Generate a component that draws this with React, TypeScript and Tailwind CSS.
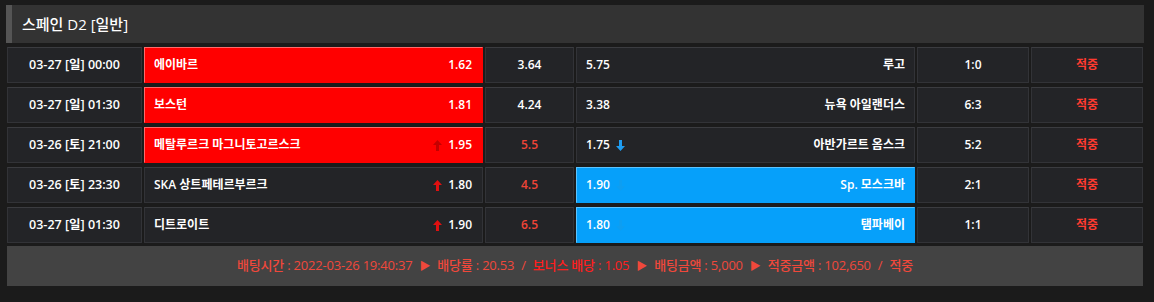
import React from 'react'

type Side = 'none' | 'home' | 'away'

type Game = {
  date: string
  home: string
  homeOdds: string
  homeUp?: boolean
  draw: string
  drawRed?: boolean
  away: string
  awayOdds: string
  awayDown?: boolean
  score: string
  pick: Side
}

const games: Game[] = [
  { date: '03-27 [일] 00:00', home: '에이바르', homeOdds: '1.62', draw: '3.64', away: '루고', awayOdds: '5.75', score: '1:0', pick: 'home' },
  { date: '03-27 [일] 01:30', home: '보스턴', homeOdds: '1.81', draw: '4.24', away: '뉴욕 아일랜더스', awayOdds: '3.38', score: '6:3', pick: 'home' },
  { date: '03-26 [토] 21:00', home: '메탈루르크 마그니토고르스크', homeOdds: '1.95', homeUp: true, draw: '5.5', drawRed: true, away: '아반가르트 옴스크', awayOdds: '1.75', awayDown: true, score: '5:2', pick: 'home' },
  { date: '03-26 [토] 23:30', home: 'SKA 상트페테르부르크', homeOdds: '1.80', homeUp: true, draw: '4.5', drawRed: true, away: 'Sp. 모스크바', awayOdds: '1.90', awayDown: true, score: '2:1', pick: 'away' },
  { date: '03-27 [일] 01:30', home: '디트로이트', homeOdds: '1.90', homeUp: true, draw: '6.5', drawRed: true, away: '탬파베이', awayOdds: '1.80', awayDown: true, score: '1:1', pick: 'away' },
]

const cell = 'h-[36px] flex items-center border border-[#323337] border-t-[#3b3c40] bg-[#232427]'
const redCell = 'h-[36px] flex items-center border border-[#ff0000] border-t-[#ff6b6b] border-l-[#ff6b6b] bg-[#ff0000]'
const blueCell = 'h-[36px] flex items-center border border-[#06a0fa] border-t-[#5cc4ff] border-l-[#5cc4ff] bg-[#06a0fa]'

function UpArrow({ color }: { color: string }) {
  return (
    <svg width="9" height="11" viewBox="0 0 9 11" className="mr-[6px]">
      <path d="M4.5 0 L9 5 L6 5 L6 11 L3 11 L3 5 L0 5 Z" fill={color} />
    </svg>
  )
}

function DownArrow({ color }: { color: string }) {
  return (
    <svg width="9" height="11" viewBox="0 0 9 11" className="ml-[6px]">
      <path d="M3 0 L6 0 L6 6 L9 6 L4.5 11 L0 6 L3 6 Z" fill={color} />
    </svg>
  )
}

function Row({ g }: { g: Game }) {
  const homeSel = g.pick === 'home'
  const awaySel = g.pick === 'away'
  return (
    <div className="flex gap-[2px]">
      <div className={`${cell} w-[135px] justify-center text-[12.5px]`}>{g.date}</div>
      <div className={`${homeSel ? redCell : cell} w-[339px] justify-between pl-[9px] pr-[10px]`}>
        <span>{g.home}</span>
        <span className="flex items-center">
          {g.homeUp && <UpArrow color={homeSel ? '#c40000' : '#e01010'} />}
          {g.homeOdds}
        </span>
      </div>
      <div className={`${cell} w-[89px] justify-center ${g.drawRed ? 'text-[#ef4437]' : ''}`}>{g.draw}</div>
      <div className={`${awaySel ? blueCell : cell} w-[339px] justify-between pl-[9px] pr-[9px]`}>
        <span className="flex items-center">
          {g.awayOdds}
          {g.awayDown && <DownArrow color={awaySel ? '#0d9ef2' : '#1e9cf0'} />}
        </span>
        <span>{g.away}</span>
      </div>
      <div className={`${cell} w-[112px] justify-center`}>{g.score}</div>
      <div className={`${cell} w-[112px] justify-center text-[#ff3b30]`}>적중</div>
    </div>
  )
}

export default function App() {
  return (
    <div
      className="h-[302px] bg-[#1b1b1b] pt-[5px] pl-[6px] text-white text-[12px] font-semibold"
      style={{ fontFamily: '"Open Sans", "Noto Sans CJK KR", sans-serif' }}
    >
      <div className="w-[1138px] h-[38px] flex items-center bg-[#333333] border-l-[6px] border-[#555555] pl-[10px] text-[15px] font-medium">
        스페인 D2 [일반]
      </div>
      <div className="mt-[4px] ml-[1px] flex flex-col gap-[4px]">
        {games.map((g, i) => (
          <Row key={i} g={g} />
        ))}
      </div>
      <div className="mt-[3px] ml-[1px] w-[1136px] h-[40px] bg-[#434343] flex items-center justify-center gap-[7px] text-[#f0483b] text-[13px] font-medium tracking-[-0.2px]">
        <span>배팅시간 : 2022-03-26 19:40:37</span>
        <span className="text-[11px]">▶</span>
        <span>배당률 : 20.53</span>
        <span>/</span>
        <span className="text-[#ff1e1e]">보너스 배당 : 1.05</span>
        <span className="text-[11px]">▶</span>
        <span>배팅금액 : 5,000</span>
        <span className="text-[11px]">▶</span>
        <span>적중금액 : 102,650</span>
        <span>/</span>
        <span>적중</span>
      </div>
    </div>
  )
}
